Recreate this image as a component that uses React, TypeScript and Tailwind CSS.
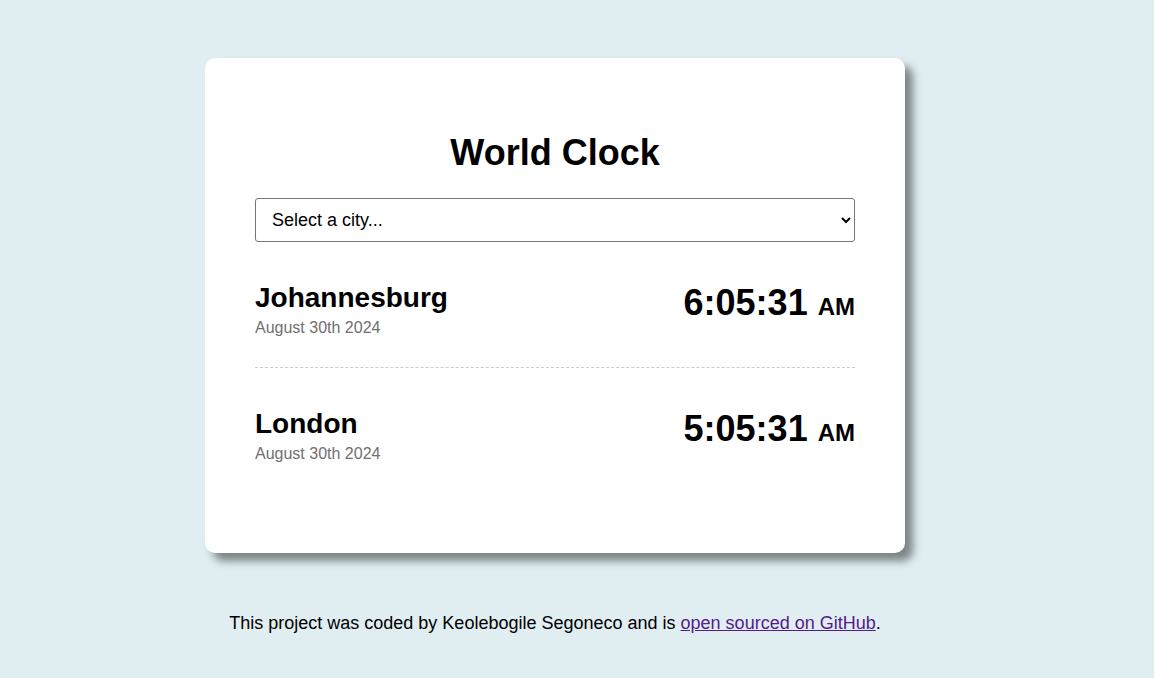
import React from 'react';

type City = { name: string; date: string; time: string; period: string };

const cities: City[] = [
  { name: 'Johannesburg', date: 'August 30th 2024', time: '6:05:31', period: 'AM' },
  { name: 'London', date: 'August 30th 2024', time: '5:05:31', period: 'AM' },
];

const App: React.FC = () => {
  return (
    <div className="min-h-[678px] bg-[#e0eef2] font-['Liberation_Sans',Arial,sans-serif] text-black">
      <div className="w-[700px] ml-[205px] pt-[58px]">
        <div className="bg-white rounded-[10px] px-[50px] pt-[71px] pb-[60px] shadow-[8px_8px_8px_rgba(0,0,0,0.45)]">
          <h1 className="text-[36px] font-bold text-center leading-[48px] mb-[21px]">World Clock</h1>
          <select className="w-full h-[44px] border border-[#767676] rounded-[3px] px-[12px] text-[18px] bg-white">
            <option>Select a city...</option>
          </select>
          <div>
            {cities.map((c, i) => (
              <div
                key={c.name}
                className={`flex justify-between items-start pt-[40px] pb-[29px] ${
                  i < cities.length - 1 ? 'border-b border-dashed border-[#cccccc]' : ''
                }`}
              >
                <div>
                  <div className="text-[28px] font-bold leading-[32px]">{c.name}</div>
                  <div className="text-[16px] text-[#6f6f6f] leading-[20px] mt-[4px]">{c.date}</div>
                </div>
                <div className="font-bold text-[36px] leading-[44px] -mt-[1px]">
                  {c.time} <span className="text-[24px]">{c.period}</span>
                </div>
              </div>
            ))}
          </div>
        </div>
        <p className="text-center text-[18px] mt-[57px]">
          This project was coded by Keolebogile Segoneco and is{' '}
          <a href="#" className="underline text-[#551a8b]">open sourced on GitHub</a>.
        </p>
      </div>
    </div>
  );
};

export default App;
